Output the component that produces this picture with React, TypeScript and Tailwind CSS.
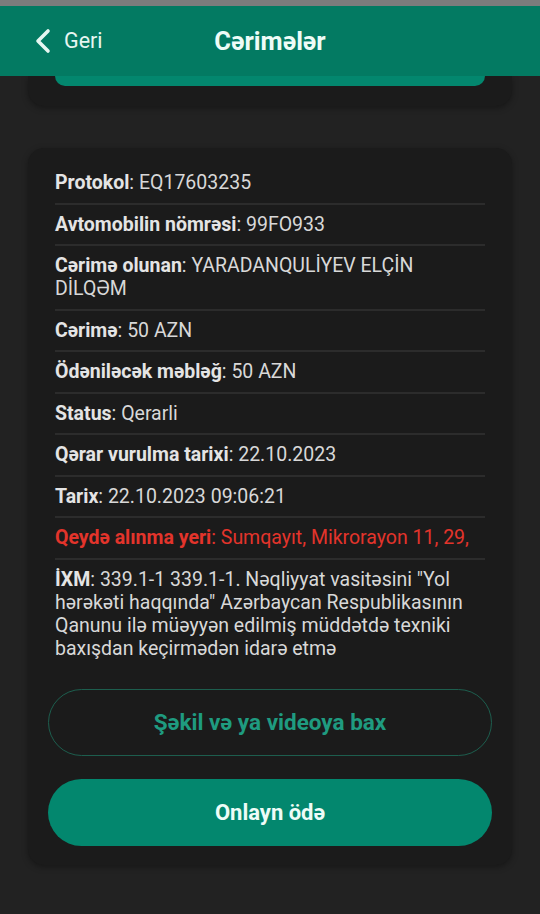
const rows: { label: string; value: string; red?: boolean }[] = [
  { label: "Protokol", value: "EQ17603235" },
  { label: "Avtomobilin nömrəsi", value: "99FO933" },
  { label: "Cərimə olunan", value: "YARADANQULİYEV ELÇİN DİLQƏM" },
  { label: "Cərimə", value: "50 AZN" },
  { label: "Ödəniləcək məbləğ", value: "50 AZN" },
  { label: "Status", value: "Qerarli" },
  { label: "Qərar vurulma tarixi", value: "22.10.2023" },
  { label: "Tarix", value: "22.10.2023 09:06:21" },
  { label: "Qeydə alınma yeri", value: "Sumqayıt, Mikrorayon 11, 29,", red: true },
  {
    label: "İXM",
    value:
      '339.1-1 339.1-1. Nəqliyyat vasitəsini "Yol hərəkəti haqqında" Azərbaycan Respublikasının Qanunu ilə müəyyən edilmiş müddətdə texniki baxışdan keçirmədən idarə etmə',
  },
];

export default function App() {
  return (
    <div className="min-h-[914px] bg-[#222222] font-['Roboto',sans-serif]">
      {/* status strip */}
      <div className="h-[6px] bg-[#7c7c7c]" />

      {/* Header */}
      <div className="relative z-10 flex h-[70px] items-center bg-[#037a62] px-[35px]">
        <div className="flex items-center gap-[13px] text-[#e6f6f1]">
          <svg width="16" height="26" viewBox="0 0 16 26" fill="none">
            <path
              d="M13 3 L3 13 L13 23"
              stroke="currentColor"
              strokeWidth="3.6"
              strokeLinecap="round"
              strokeLinejoin="round"
            />
          </svg>
          <span className="text-[21.5px]">Geri</span>
        </div>
        <h1 className="pointer-events-none absolute left-0 right-0 text-center text-[25.5px] font-bold text-[#eefcf7]">
          Cərimələr
        </h1>
      </div>

      {/* Previous card, scrolled under header */}
      <div className="mx-[28px] h-[30px] rounded-b-[16px] bg-[#1b1b1b] px-[27px] shadow-[0_2px_6px_rgba(0,0,0,0.35)]">
        <div className="h-[10px] rounded-b-[24px] bg-[#03876e]" />
      </div>

      {/* Fine card */}
      <div className="mx-[28px] mt-[42px] rounded-[16px] bg-[#1b1b1b] px-[27px] pt-[15px] pb-[19px] shadow-[0_2px_6px_rgba(0,0,0,0.35)]">
        <div>
          {rows.map((row, i) => (
            <div
              key={row.label}
              className={`py-[8.25px] text-[19.5px] leading-[23px] ${
                i < rows.length - 1 ? "border-b-[2px] border-[#2c2c2c]" : ""
              } ${row.red ? "text-[#e3342b]" : "text-[#d8d8d8]"}`}
            >
              <span className={`font-bold ${row.red ? "" : "text-[#e4e4e4]"}`}>
                {row.label}
              </span>
              : {row.value}
            </div>
          ))}
        </div>

        <div className="-mx-[7px] mt-[21px] flex flex-col gap-[23px]">
          <button className="flex h-[67px] items-center justify-center rounded-full border-[1.5px] border-[#1d5e4e] text-[22.5px] font-bold text-[#1f9b80]">
            Şəkil və ya videoya bax
          </button>
          <button className="flex h-[67px] items-center justify-center rounded-full bg-[#03876e] text-[22px] font-bold text-[#eefcf7]">
            Onlayn ödə
          </button>
        </div>
      </div>
    </div>
  );
}
